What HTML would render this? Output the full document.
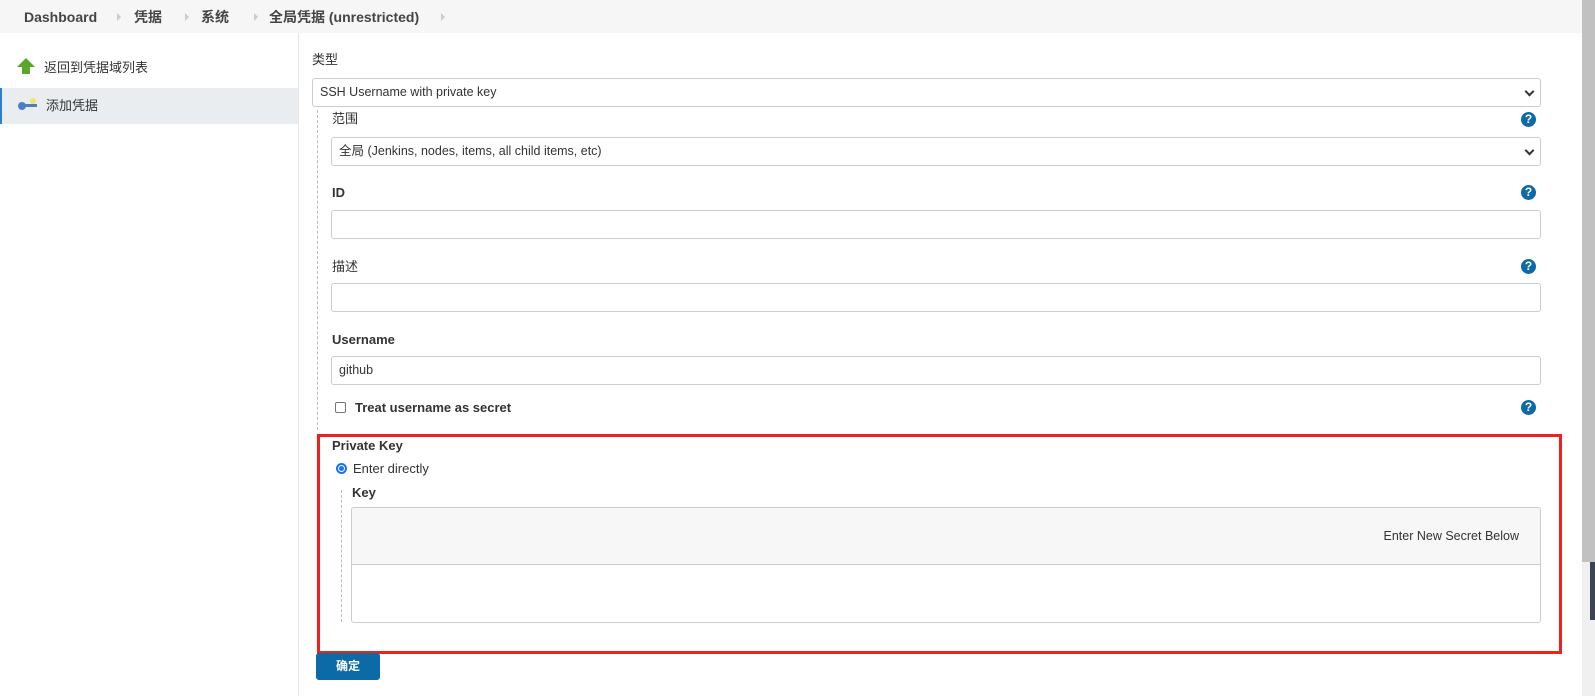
<!DOCTYPE html>
<html><head><meta charset="utf-8"><style>
*{box-sizing:border-box;margin:0;padding:0}
body{width:1595px;height:696px;overflow:hidden;background:#fff;font-family:"Liberation Sans","Noto Sans CJK SC",sans-serif;font-size:12.5px;color:#333;position:relative}
.bc{position:absolute;left:0;top:0;width:1582px;height:33px;background:#f6f6f6;font-weight:bold;font-size:14px;color:#444}
.bc span{position:absolute;top:8px;line-height:18px;height:18px}
.bc i{position:absolute;top:13px;width:0;height:0;border-left:4px solid #ccc;border-top:4px solid transparent;border-bottom:4px solid transparent}
.side{position:absolute;left:0;top:33px;width:299px;height:663px;border-right:1px solid #e4e4e4}
.it{position:absolute;left:0;width:298px;height:36px;font-size:13px}
.it span{position:absolute;left:44px;top:9px;line-height:18px}
.lbl{position:absolute;font-size:13px;color:#333;line-height:16px}
.b{font-weight:bold}
.inp{position:absolute;border:1px solid #ccc;border-radius:3px;background:#fff;height:29px;font-size:12.5px;padding:0 7px;line-height:27px}
.sel:after{content:"";position:absolute;right:7px;top:9px;width:5px;height:5px;border-right:2px solid #333;border-bottom:2px solid #333;transform:rotate(45deg)}
.q{position:absolute;width:15px;height:15px;border-radius:50%;background:#0c6aa6;color:#fff;font-weight:bold;font-size:12px;text-align:center;line-height:15px}
.dash{position:absolute;border-left:1px dashed #bbb}
</style></head><body>
<div class="bc">
<span style="left:24px">Dashboard</span><i style="left:117px"></i>
<span style="left:134px">凭据</span><i style="left:185px"></i>
<span style="left:201px">系统</span><i style="left:254px"></i>
<span style="left:269px">全局凭据 (unrestricted)</span><i style="left:441px"></i>
</div>
<div class="side">
<div class="it" style="top:17px"><svg style="position:absolute;left:17px;top:8px" width="18" height="17"><path d="M9 0L18 9H13V16H5V9H0Z" fill="#5aa62a"/></svg><span>返回到凭据域列表</span></div>
<div class="it" style="top:55px;background:#e9edf0;border-left:2px solid #2c7fd1"><svg style="position:absolute;left:15px;top:9px" width="22" height="18"><circle cx="5" cy="9" r="4" fill="#4a7fc4"/><rect x="7" y="7" width="13" height="3" fill="#4a7fc4"/><circle cx="16" cy="4" r="3" fill="#f2e26a"/></svg><span>添加凭据</span></div>
</div>
<div class="lbl" style="left:312px;top:52px">类型</div>
<div class="inp sel" style="left:312px;top:78px;width:1229px">SSH Username with private key</div>
<div class="dash" style="left:317px;top:110px;height:320px"></div>
<div class="lbl" style="left:332px;top:111px">范围</div><div class="q" style="left:1521px;top:112px">?</div>
<div class="inp sel" style="left:331px;top:137px;width:1210px">全局 (Jenkins, nodes, items, all child items, etc)</div>
<div class="lbl b" style="left:332px;top:185px">ID</div><div class="q" style="left:1521px;top:185px">?</div>
<div class="inp" style="left:331px;top:210px;width:1210px"></div>
<div class="lbl" style="left:332px;top:259px">描述</div><div class="q" style="left:1521px;top:259px">?</div>
<div class="inp" style="left:331px;top:283px;width:1210px"></div>
<div class="lbl b" style="left:332px;top:332px">Username</div>
<div class="inp" style="left:331px;top:356px;width:1210px">github</div>
<div style="position:absolute;left:335px;top:402px;width:11px;height:11px;border:1px solid #777;border-radius:2px"></div>
<div class="lbl b" style="left:355px;top:400px">Treat username as secret</div><div class="q" style="left:1521px;top:400px">?</div>
<div style="position:absolute;left:317px;top:434px;width:1245px;height:220px;border:3px solid #f0201c"></div>
<div class="lbl b" style="left:332px;top:438px">Private Key</div>
<div style="position:absolute;left:336px;top:463px;width:11px;height:11px;border-radius:50%;background:#1a73e8;border:1px solid #1a73e8"><div style="position:absolute;left:2px;top:2px;width:5px;height:5px;border-radius:50%;background:#1a73e8;box-shadow:0 0 0 1px #fff"></div></div>
<div class="lbl" style="left:353px;top:461px">Enter directly</div>
<div class="dash" style="left:341px;top:490px;height:132px"></div>
<div class="lbl b" style="left:352px;top:485px">Key</div>
<div style="position:absolute;left:351px;top:507px;width:1190px;height:116px;border:1px solid #ccc;border-radius:3px;overflow:hidden">
<div style="height:57px;background:#f7f7f7;border-bottom:1px solid #ccc;text-align:right;padding:21px 21px 0 0">Enter New Secret Below</div></div>
<div style="position:absolute;left:316px;top:653px;width:64px;height:27px;background:#0c6aa6;border-radius:3px;color:#fff;font-weight:bold;font-size:12px;text-align:center;line-height:27px">确定</div>
<div style="position:absolute;left:1582px;top:0;width:13px;height:696px;background:#f0f0f0"></div>
<div style="position:absolute;left:1582px;top:0;width:13px;height:562px;background:#c1c1c1"></div>
<div style="position:absolute;left:1590px;top:562px;width:5px;height:58px;background:#3b4450"></div>
</body></html>
